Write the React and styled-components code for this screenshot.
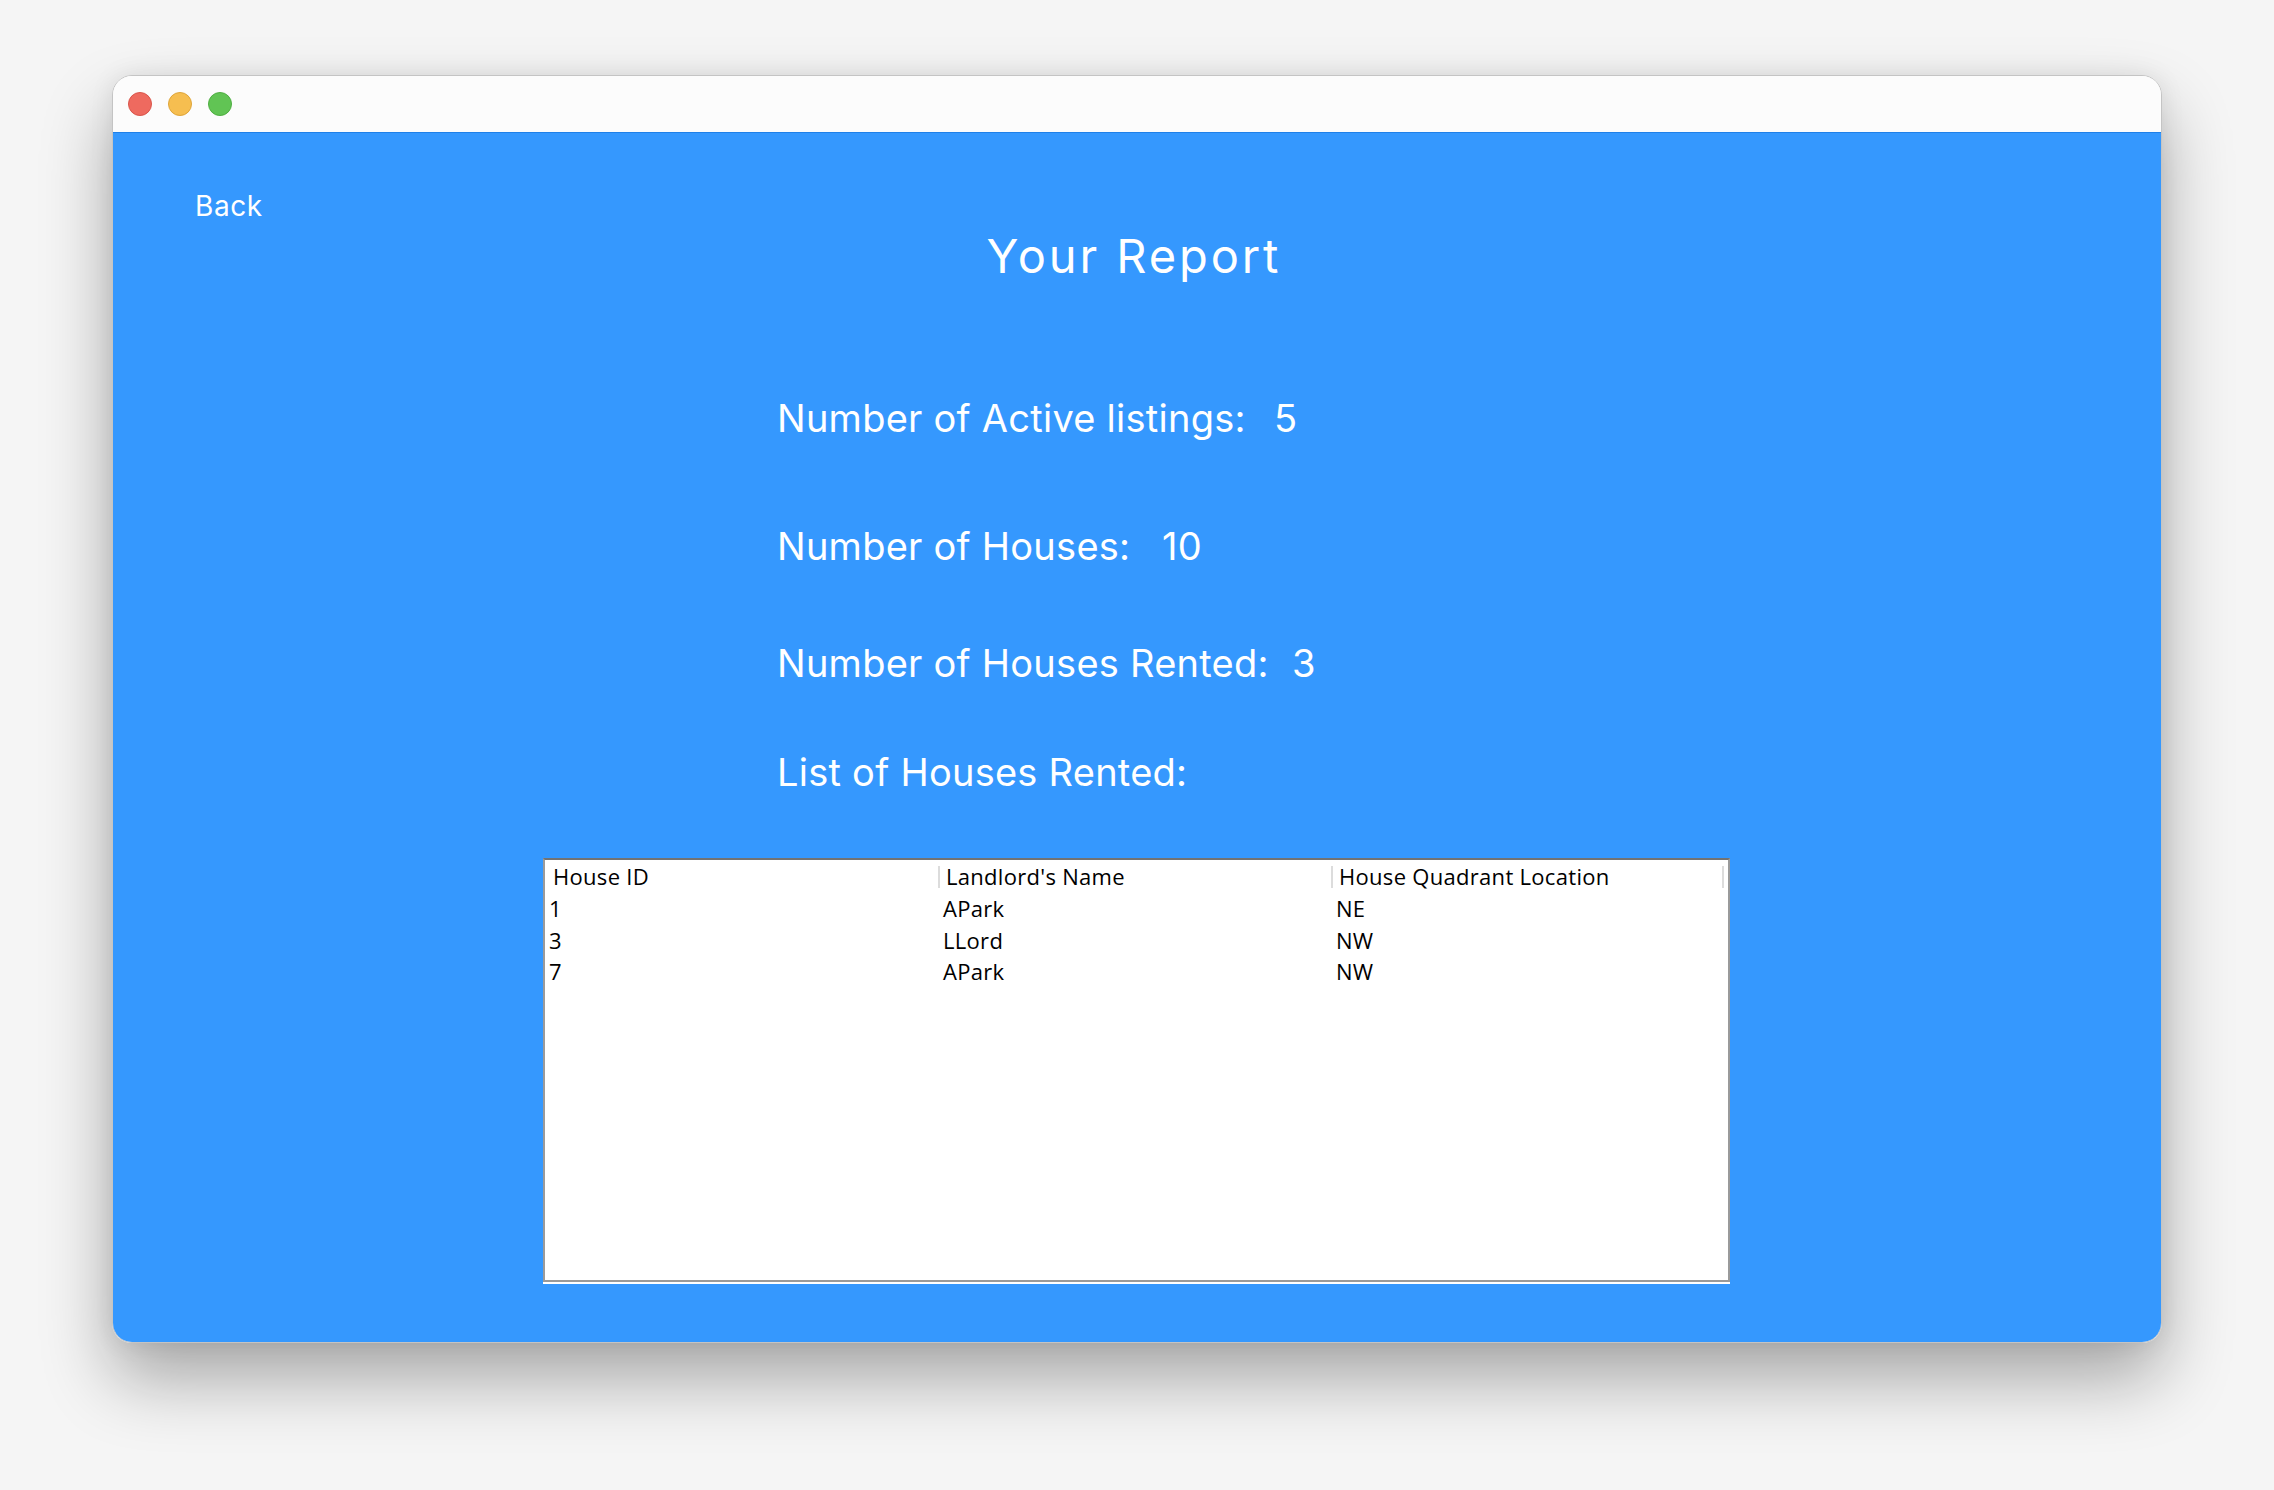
import React from "react";
import styled, { createGlobalStyle } from "styled-components";

const GlobalStyle = createGlobalStyle`
  html, body {
    margin: 0;
    padding: 0;
    background: #f5f5f5;
  }
  * { box-sizing: border-box; }
`;

const Page = styled.div`
  width: 2274px;
  height: 1490px;
  padding: 75px 0 0 112px;
  overflow: hidden;
`;

const Window = styled.div`
  width: 2050px;
  height: 1268px;
  display: flex;
  flex-direction: column;
  border: 1px solid #c4c4c4;
  border-radius: 20px;
  overflow: hidden;
  box-shadow: 0 36px 70px rgba(0, 0, 0, 0.32), 0 0 24px rgba(0, 0, 0, 0.08);
`;

const TitleBar = styled.div`
  height: 57px;
  flex: none;
  display: flex;
  align-items: center;
  gap: 16px;
  padding-left: 15px;
  background: #fcfcfc;
  border-bottom: 1px solid #1f80e8;
`;

const Light = styled.span`
  width: 24px;
  height: 24px;
  border-radius: 50%;
  background: ${(p) => p.$color};
  border: 1px solid ${(p) => p.$edge};
`;

const Content = styled.div`
  flex: 1;
  background: #3598fe;
  padding-top: 59px;
  color: #ffffff;
  font-family: Inter, "Liberation Sans", sans-serif;
`;

const Header = styled.div`
  display: grid;
  grid-template-columns: 1fr auto 1fr;
  align-items: start;
`;

const BackLink = styled.a`
  justify-self: start;
  margin-left: 82px;
  font-size: 28px;
  line-height: 1;
  letter-spacing: 0.6px;
  color: #ffffff;
  cursor: pointer;
`;

const Title = styled.h1`
  margin: 40px 6px 0 0;
  font-size: 47px;
  font-weight: 400;
  line-height: 1;
  letter-spacing: 2.9px;
`;

const Stats = styled.div`
  display: flex;
  flex-direction: column;
  margin-left: 664px;
`;

const StatRow = styled.div`
  display: flex;
  align-items: baseline;
  margin-top: ${(p) => p.$top}px;
  font-size: 38px;
  line-height: 1;
  letter-spacing: 0.25px;
`;

const StatLabel = styled.span`
  flex: none;
  width: ${(p) => (p.$width ? `${p.$width}px` : "auto")};
`;

const StatValue = styled.span``;

const TableBox = styled.div`
  margin: 67px 0 0 430px;
  width: 1187px;
  height: 424px;
  background: #ffffff;
  border: 2px solid #9a9a9a;
  border-top-color: #737373;
  box-shadow: 0 2px 0 #ffffff;
  font-family: "Open Sans", "Liberation Sans", sans-serif;
  font-size: 22px;
  letter-spacing: 0.3px;
  color: #000000;
`;

const HeadRow = styled.div`
  display: grid;
  grid-template-columns: repeat(3, 393px);
  height: 32px;
  align-items: center;
`;

const HeadCell = styled.div`
  position: relative;
  padding-left: 8px;
  line-height: 32px;
  white-space: nowrap;
  &::before,
  &::after {
    position: absolute;
    top: 6px;
    width: 2px;
    height: 22px;
    background: #dcdcdc;
  }
  ${(p) => (p.$first ? "" : "&::before { content: ''; left: 0; }")}
  ${(p) => (p.$last ? "&::after { content: ''; right: 0; }" : "")}
`;

const DataRow = styled.div`
  display: grid;
  grid-template-columns: repeat(3, 393px);
  height: 31.5px;
  line-height: 33px;
`;

const DataCell = styled.div`
  padding-left: ${(p) => (p.$first ? 4 : 5)}px;
  white-space: nowrap;
`;

const rented = [
  { id: "1", landlord: "APark", quadrant: "NE" },
  { id: "3", landlord: "LLord", quadrant: "NW" },
  { id: "7", landlord: "APark", quadrant: "NW" },
];

const columns = ["House ID", "Landlord's Name", "House Quadrant Location"];

export default function App() {
  return (
    <>
      <GlobalStyle />
      <Page>
        <Window>
          <TitleBar>
            <Light $color="#ee6a5f" $edge="#d9554b" />
            <Light $color="#f6be50" $edge="#dea53a" />
            <Light $color="#61c454" $edge="#4fae42" />
          </TitleBar>
          <Content>
            <Header>
              <BackLink>Back</BackLink>
              <Title>Your Report</Title>
              <span />
            </Header>
            <Stats>
              <StatRow $top={120}>
                <StatLabel $width={497}>Number of Active listings:</StatLabel>
                <StatValue>5</StatValue>
              </StatRow>
              <StatRow $top={90}>
                <StatLabel $width={385}>Number of Houses:</StatLabel>
                <StatValue>10</StatValue>
              </StatRow>
              <StatRow $top={79}>
                <StatLabel $width={515}>Number of Houses Rented:</StatLabel>
                <StatValue>3</StatValue>
              </StatRow>
              <StatRow $top={71}>
                <StatLabel>List of Houses Rented:</StatLabel>
              </StatRow>
            </Stats>
            <TableBox>
              <HeadRow>
                {columns.map((c, i) => (
                  <HeadCell key={c} $first={i === 0} $last={i === columns.length - 1}>
                    {c}
                  </HeadCell>
                ))}
              </HeadRow>
              {rented.map((r, i) => (
                <DataRow key={i}>
                  <DataCell $first>{r.id}</DataCell>
                  <DataCell>{r.landlord}</DataCell>
                  <DataCell>{r.quadrant}</DataCell>
                </DataRow>
              ))}
            </TableBox>
          </Content>
        </Window>
      </Page>
    </>
  );
}
